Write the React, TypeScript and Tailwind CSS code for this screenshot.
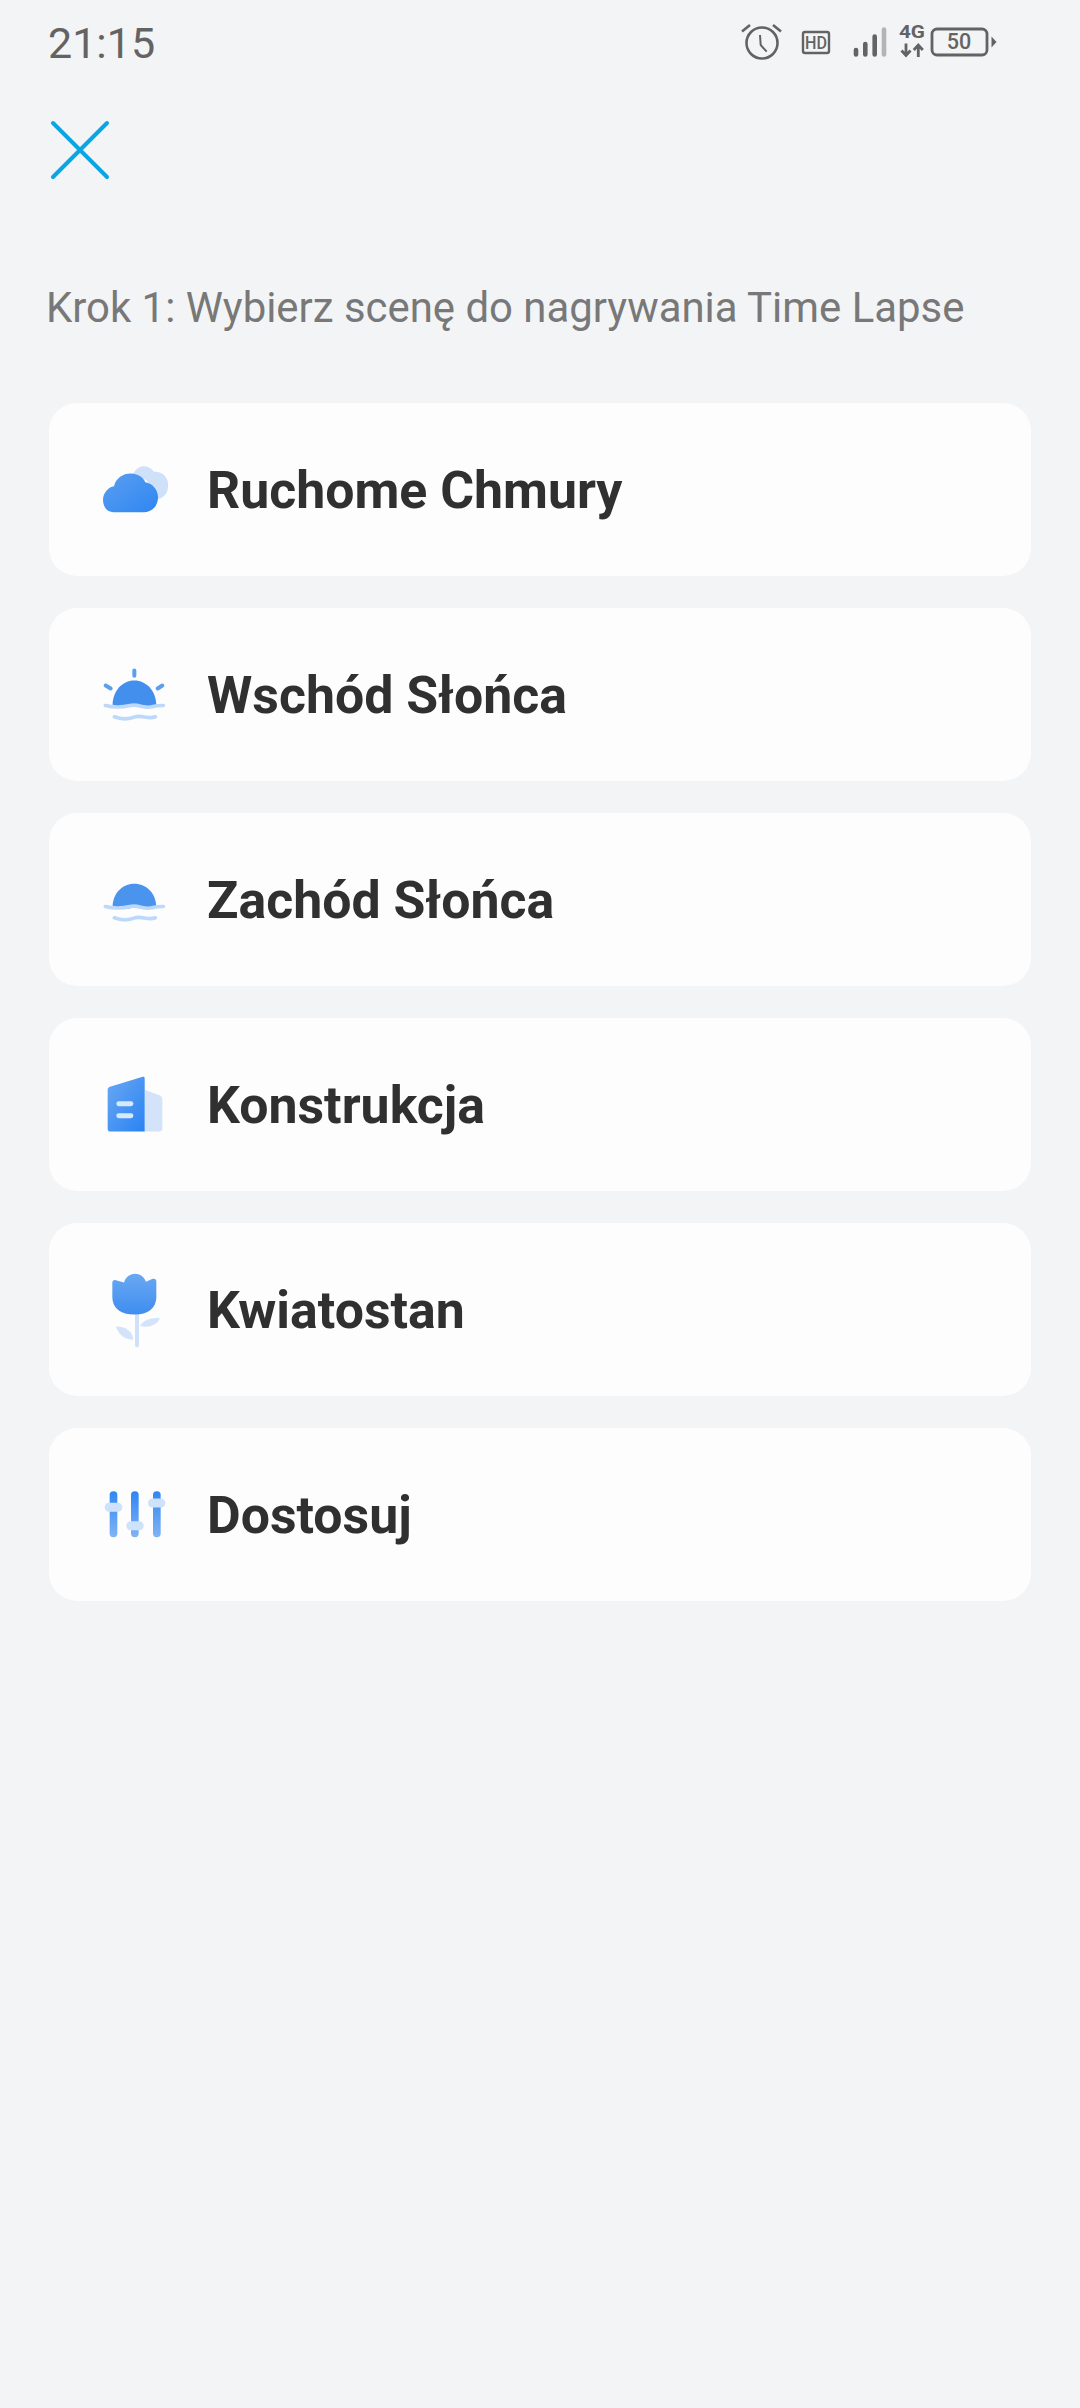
const font = 'font-["Roboto",sans-serif]';

function CloudIcon() {
  return (
    <svg width="120" height="90" viewBox="0 13.5 360 270">
      <defs>
        <linearGradient id="cloudFill" x1="0" y1="0" x2="1" y2="1">
          <stop offset="0" stopColor="#5b9ff0" />
          <stop offset="1" stopColor="#2f86f2" />
        </linearGradient>
      </defs>
      <path d="M160 100 C172 72 205 70 222 94 C250 92 268 115 264 140 C262 160 250 172 232 176 L200 120 Z" fill="#cfe1f9" />
      <path d="M100 215 C80 215 69 198 69 178 C69 158 84 140 102 137 C108 112 130 98 154 99 C176 100 190 112 196 125 C218 128 234 148 234 170 C234 196 216 215 192 215 Z" fill="url(#cloudFill)" />
    </svg>
  );
}

function Waves({ y }: { y: number }) {
  return (
    <g fill="none" stroke="#bcd8fa" strokeWidth="11" strokeLinecap="round">
      <path d={`M76 ${y} C100 ${y + 6} 125 ${y + 6} 150 ${y} C175 ${y - 6} 190 ${y + 10} 215 ${y + 4} C230 ${y} 240 ${y} 250 ${y}`} />
      <path d={`M103 ${y + 34} C125 ${y + 42} 145 ${y + 42} 165 ${y + 34} C185 ${y + 28} 205 ${y + 42} 226 ${y + 34}`} />
    </g>
  );
}

function SunriseIcon() {
  return (
    <svg width="120" height="90" viewBox="0 -1.5 360 270">
      <path d="M98 165 C98 122 126 90 163 90 C200 90 229 122 229 165 C205 172 185 160 163 165 C140 170 120 172 98 165 Z" fill="#438fee" />
      <g stroke="#5b9ff0" strokeWidth="12" strokeLinecap="round">
        <path d="M163 60 L163 76" />
        <path d="M77 105 L92 114" />
        <path d="M247 105 L233 114" />
      </g>
      <Waves y={165} />
    </svg>
  );
}

function SunsetIcon() {
  return (
    <svg width="120" height="90" viewBox="0 -16.5 360 270">
      <path d="M98 140 C98 100 126 70 163 70 C200 70 229 100 229 140 C205 146 185 134 163 140 C140 146 120 146 98 140 Z" fill="#4a94ee" />
      <Waves y={138} />
    </svg>
  );
}

function BuildingIcon() {
  return (
    <svg width="120" height="90" viewBox="0 -1.5 360 270">
      <defs>
        <linearGradient id="buildingFill" x1="0" y1="0" x2="1" y2="1">
          <stop offset="0" stopColor="#6aa8f2" />
          <stop offset="1" stopColor="#2a83f2" />
        </linearGradient>
      </defs>
      <path d="M194 88 L238 104 C244 106 247 110 247 116 L247 204 C247 210 243 213 238 213 L194 213 Z" fill="#d3e4fa" />
      <path d="M83 88 C83 83 85 81 90 79 L188 49 C192 48 194 50 194 54 L194 213 L90 213 C85 213 83 210 83 205 Z" fill="url(#buildingFill)" />
      <rect x="109" y="122" width="51" height="15" rx="7" fill="#d6e8fc" />
      <rect x="109" y="158" width="51" height="15" rx="7" fill="#d6e8fc" />
    </svg>
  );
}

function FlowerIcon() {
  return (
    <svg width="120" height="90" viewBox="0 13.5 360 270">
      <defs>
        <linearGradient id="flowerFill" x1="0" y1="0" x2="0" y2="1">
          <stop offset="0" stopColor="#6aa8f2" />
          <stop offset="1" stopColor="#3e8df0" />
        </linearGradient>
      </defs>
      <rect x="165" y="155" width="12" height="105" rx="6" fill="#cfe1f9" />
      <path d="M180 196 C190 178 215 170 240 173 C232 192 205 204 180 196 Z" fill="#d3e4fa" />
      <path d="M160 238 C135 238 115 222 108 198 C135 196 158 212 160 238 Z" fill="#d3e4fa" />
      <path d="M97 66 C97 60 102 57 108 59 L132 66 C138 48 152 40 165 40 C180 40 192 48 198 64 L218 55 C224 53 229 56 229 62 L229 110 C229 142 204 162 164 162 C122 162 97 142 97 110 Z" fill="url(#flowerFill)" />
    </svg>
  );
}

function SlidersIcon() {
  return (
    <svg width="120" height="90" viewBox="0 -1.5 360 270">
      <defs>
        <linearGradient id="sliderFill" x1="0" y1="0" x2="0" y2="1">
          <stop offset="0" stopColor="#2f86f2" />
          <stop offset="1" stopColor="#7fb4f6" />
        </linearGradient>
      </defs>
      <rect x="89" y="62" width="23" height="138" rx="11" fill="url(#sliderFill)" />
      <rect x="153" y="62" width="23" height="138" rx="11" fill="url(#sliderFill)" />
      <rect x="219" y="62" width="23" height="138" rx="11" fill="url(#sliderFill)" />
      <rect x="74" y="97" width="53" height="27" rx="13" fill="#cfe2fb" />
      <rect x="139" y="152" width="52" height="27" rx="13" fill="#cfe2fb" />
      <rect x="204" y="84" width="52" height="27" rx="13" fill="#cfe2fb" />
    </svg>
  );
}

// viewBox uses page pixels so the strip can be read against the reference directly
function StatusIcons() {
  return (
    <svg width="264" height="44" viewBox="736 20 264 44" fill="none" stroke="#636363" fontFamily="Roboto, sans-serif">
      {/* alarm */}
      <circle cx="762" cy="43" r="15.5" strokeWidth="2.6" />
      <path d="M760 35 L760.7 45 L766.7 51.7" strokeWidth="2" />
      <path d="M742 31.5 L750 25 M781 31.5 L773 25" strokeWidth="2.6" />
      {/* HD */}
      <rect x="803" y="32" width="26" height="21" rx="2" strokeWidth="2.4" />
      <text x="805" y="49" fontSize="18" fontWeight="500" fill="#636363" stroke="none" textLength="22" lengthAdjust="spacingAndGlyphs">HD</text>
      {/* signal */}
      <g strokeLinecap="round" strokeWidth="4.6">
        <path d="M856 50 L856 54.4" />
        <path d="M865.3 44 L865.3 54.4" />
        <path d="M874.7 36.6 L874.7 54.4" />
        <path d="M884 29.6 L884 54.4" stroke="#b4b4b4" />
      </g>
      {/* 4G */}
      <text x="899" y="38.3" fontSize="17.5" fontWeight="700" fill="#636363" stroke="none" textLength="26" lengthAdjust="spacingAndGlyphs">4G</text>
      <path d="M906 43.5 L906 56 M901.5 50.5 L906 55.5 L910.5 50.5" strokeWidth="2.8" />
      <path d="M918.3 57 L918.3 44.5 M913.8 50 L918.3 45 L922.8 50" strokeWidth="2.8" />
      {/* battery */}
      <rect x="932" y="29" width="55" height="26" rx="5" strokeWidth="2.8" />
      <path d="M991.5 36.5 L996.5 42 L991.5 47.5 Z" fill="#636363" stroke="none" />
      <text x="959" y="49.3" fontSize="21.5" fontWeight="500" textAnchor="middle" fill="#636363" stroke="none">50</text>
    </svg>
  );
}

const scenes = [
  { name: 'Ruchome Chmury', icon: <CloudIcon /> },
  { name: 'Wschód Słońca', icon: <SunriseIcon /> },
  { name: 'Zachód Słońca', icon: <SunsetIcon /> },
  { name: 'Konstrukcja', icon: <BuildingIcon /> },
  { name: 'Kwiatostan', icon: <FlowerIcon /> },
  { name: 'Dostosuj', icon: <SlidersIcon /> },
];

export default function App() {
  return (
    <div className={`w-[1080px] h-[2408px] bg-[#f3f4f6] overflow-hidden ${font}`}>
      {/* Status bar */}
      <div className="flex justify-between h-[80px] pl-[48px] pr-[80px]">
        <span className="text-[43px] leading-[86px] text-[#636363]">21:15</span>
        <div className="pt-[20px]">
          <StatusIcons />
        </div>
      </div>

      {/* Close */}
      <div className="pl-[50px] pt-[40px]">
        <svg width="60" height="60" viewBox="0 0 60 60" className="block">
          <path d="M3 3 L57 57 M57 3 L3 57" stroke="#0aa5e3" strokeWidth="4" strokeLinecap="round" />
        </svg>
      </div>

      <p className="mt-[103px] pl-[46px] text-[41.9px] leading-[50px] text-[#787878]">
        Krok 1: Wybierz scenę do nagrywania Time Lapse
      </p>

      <div className="mt-[70px] ml-[49px] mr-[49px] flex flex-col gap-[32px]">
        {scenes.map(scene => (
          <div key={scene.name} className="h-[173px] bg-[#fdfdfd] rounded-[28px] flex items-center pl-[31px]">
            {scene.icon}
            <span className="ml-[7px] mt-[3px] text-[51.8px] font-bold text-[#303030]">{scene.name}</span>
          </div>
        ))}
      </div>
    </div>
  );
}
